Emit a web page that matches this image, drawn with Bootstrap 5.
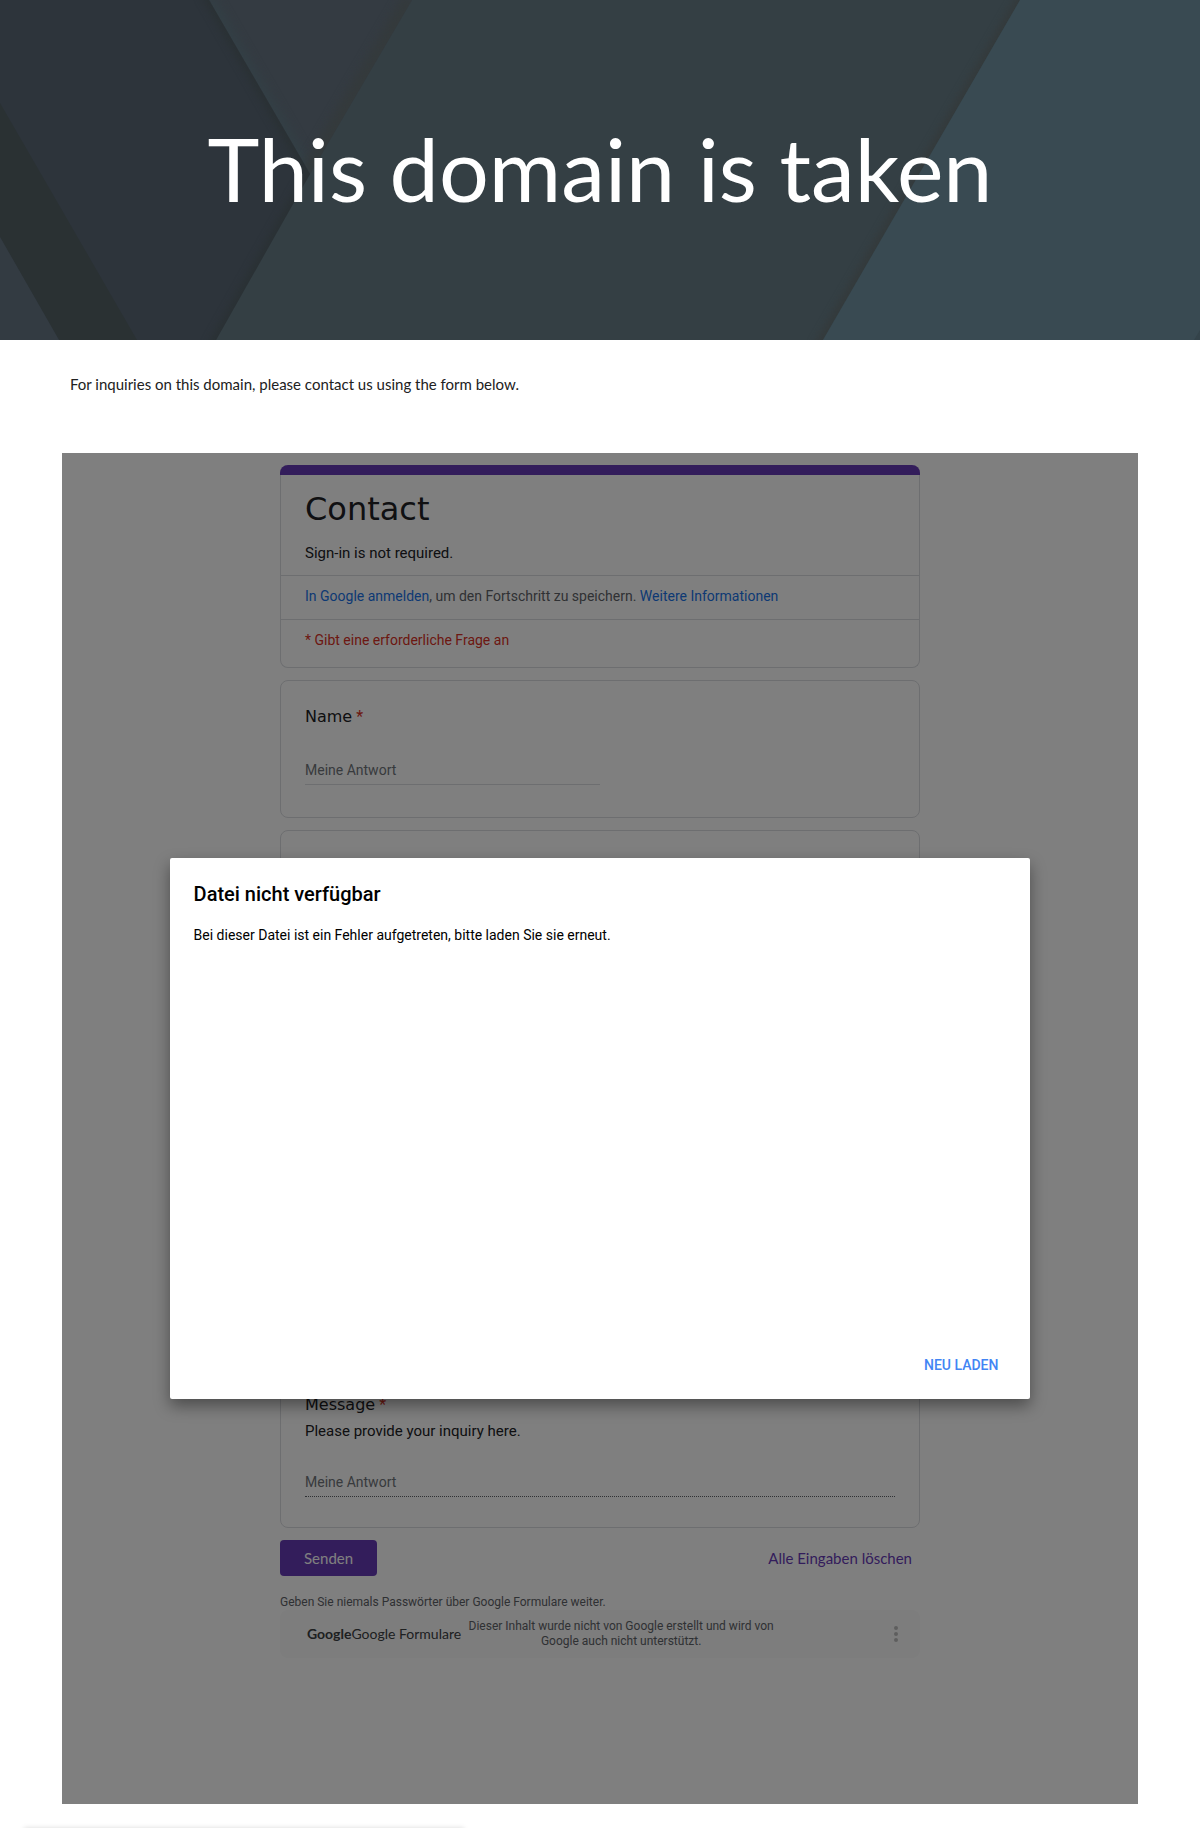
<!DOCTYPE html>
<html lang="de">
<head>
<meta charset="utf-8">
<meta name="viewport" content="width=device-width, initial-scale=1">
<title>This domain is taken</title>
<link href="https://cdn.jsdelivr.net/npm/bootstrap@5.3.0/dist/css/bootstrap.min.css" rel="stylesheet">
<style>
  body { font-family: Roboto, "Liberation Sans", sans-serif; font-size: 14px; line-height: 20px; color: #202124; }

  /* banner */
  .hero { min-height: 340px; padding-bottom: 4px; background: #343f44; }
  .hero h1 { font-family: Lato, sans-serif; font-size: 88px; line-height: 104px; font-weight: 400; }

  /* page */
  .page-body { padding: 0 62px; }
  .intro { font-family: Lato, sans-serif; font-size: 15px; line-height: 24px; padding: 32px 8px 57px; color: #212121; }

  /* form */
  .embed { padding: 12px 12px 146px; }
  .form-col { max-width: 640px; }
  .form-col a { color: #1a73e8; text-decoration: none; }
  .panel { background: #fff; border: 1px solid #dadce0; border-radius: 8px; margin-bottom: 12px; }
  .panel-intro { border-top: 0; padding-bottom: 4px; }
  .panel-stripe { height: 10px; background: #673ab7; margin: 0 -1px; border-radius: 8px 8px 0 0; }
  .panel-head { padding: 14px 24px 12px; }
  .panel-row { padding: 10px 24px 13px; border-top: 1px solid #dadce0; }
  .panel-title { font-family: "DejaVu Sans", sans-serif; font-size: 32px; line-height: 40px; margin: 0 0 14px; }
  .desc { font-size: 15px; line-height: 20px; }
  .question { padding: 24px 24px 32px; }
  .question-tall { min-height: 526px; }
  .question-long { padding-bottom: 30px; }
  .q-label { font-family: "DejaVu Sans", sans-serif; font-size: 16px; line-height: 24px; }
  .q-label .req { font-family: Roboto, sans-serif; }
  .req { color: #d93025; }
  .muted { color: #5f6368; }
  .answer { border: 0; border-bottom: 1px solid #dadce0; border-radius: 0; margin-top: 31px; padding: 0 0 4px; height: 25px; font-size: 14px; line-height: 20px; background: transparent; }
  .answer::placeholder { color: #70757a; opacity: 1; }
  .answer-dotted { border-bottom: 1px dotted #5f6368; }
  .geo { font-family: Lato, sans-serif; font-size: 15px; line-height: 20px; }
  .send { background: #673ab7; color: #fff; border: 0; border-radius: 4px; padding: 8px 24px; }
  .clear { background: none; border: 0; color: #673ab7; padding: 8px; }
  .warn { font-size: 12px; line-height: 16px; margin-top: 18px; color: #5f6368; }
  .form-foot { background: #fafafa; border-radius: 8px; padding: 9px 12px 9px 27px; font-size: 12px; line-height: 15px; color: #5f6368; }
  .foot-brand { font-family: Lato, sans-serif; font-size: 14px; line-height: 20px; color: #3c4043; }
  .foot-note { max-width: 312px; }
  .more { width: 24px; height: 24px; }

  /* error dialog */
  .scrim { background: rgba(0, 0, 0, .5); }
  .dialog-box { width: 80%; height: 40%; background: #fff; color: #000; border-radius: 2px; padding: 24px 24px 16px; box-shadow: 0 7px 16px rgba(0, 0, 0, .4); }
  .dialog-box h2 { font-size: 20px; line-height: 24px; font-weight: 500; margin: 0 0 19px; }
  .reload { color: #4285f4; background: none; border: 0; font-weight: 500; padding: 8px; }

  /* notice waiting below the page edge */
  .page-end { height: 24px; }
  .notice-bar { top: 100%; left: 24px; width: 440px; height: 40px; box-shadow: 0 0 5px rgba(0, 0, 0, .15); }
</style>
</head>
<body>
<header class="hero position-relative overflow-hidden d-flex align-items-center justify-content-center text-white text-center">
  <svg class="position-absolute top-0 start-0 w-100 h-100" viewBox="0 0 1200 340" preserveAspectRatio="xMidYMid slice" aria-hidden="true">
    <defs>
      <filter id="soft" x="-20%" y="-20%" width="140%" height="140%" color-interpolation-filters="sRGB"><feGaussianBlur stdDeviation="4"/></filter>
      <clipPath id="cLeft"><path d="M0 0H209L310 174L216 340H0Z"/></clipPath>
      <clipPath id="cTri"><path d="M209 0H412L310 174Z"/></clipPath>
      <clipPath id="cMid"><path d="M412 0H1020L823 340H216Z"/></clipPath>
    </defs>
    <rect width="1200" height="340" fill="#343f44"/>
    <path d="M209 0H412L310 174Z" fill="#343b42"/>
    <g clip-path="url(#cTri)">
      <path d="M209 0L310 174" stroke="#333f45" stroke-width="12" filter="url(#soft)"/>
      <path d="M412 0L310 174" stroke="#343a3c" stroke-width="20" filter="url(#soft)"/>
    </g>
    <path d="M0 0H209L310 174L216 340H0Z" fill="#2d343b"/>
    <g clip-path="url(#cLeft)">
      <path d="M205 -8L310 174L212 348" fill="none" stroke="#293032" stroke-width="8" filter="url(#soft)"/>
    </g>
    <path d="M0 103L137 340H59L0 237Z" fill="#2a3133"/>
    <path d="M0 237L59 340H0Z" fill="#333b42"/>
    <g clip-path="url(#cMid)">
      <path d="M1025 -8L818 348" stroke="#343838" stroke-width="7" filter="url(#soft)"/>
    </g>
    <path d="M1020 0H1200V340H823Z" fill="#394a52"/>
    <path d="M1200 330V340H1194Z" fill="#34434a"/>
  </svg>
  <h1 class="position-relative m-0">This domain is taken</h1>
</header>

<main class="page-body">
  <p class="intro m-0">For inquiries on this domain, please contact us using the form below.</p>

  <section class="embed position-relative">
    <form class="form-col mx-auto">
      <div class="panel panel-intro">
        <div class="panel-stripe"></div>
        <div class="panel-head">
          <h2 class="panel-title">Contact</h2>
          <p class="desc m-0">Sign-in is not required.</p>
        </div>
        <div class="panel-row muted"><a href="#">In Google anmelden</a>, um den Fortschritt zu speichern. <a href="#">Weitere Informationen</a></div>
        <div class="panel-row req">* Gibt eine erforderliche Frage an</div>
      </div>

      <div class="panel question">
        <label class="q-label d-flex gap-1" for="name">Name<span class="req">*</span></label>
        <input class="answer d-block w-50" id="name" type="text" placeholder="Meine Antwort">
      </div>

      <div class="panel question question-tall"></div>

      <div class="panel question question-long">
        <label class="q-label d-flex gap-1" for="message">Message<span class="req">*</span></label>
        <p class="desc mt-1 mb-0">Please provide your inquiry here.</p>
        <input class="answer answer-dotted d-block w-100" id="message" type="text" placeholder="Meine Antwort">
      </div>

      <div class="d-flex justify-content-between">
        <button type="submit" class="send geo">Senden</button>
        <button type="reset" class="clear geo">Alle Eingaben löschen</button>
      </div>

      <p class="warn mb-0">Geben Sie niemals Passwörter über Google Formulare weiter.</p>
      <footer class="form-foot d-flex align-items-center">
        <span class="foot-brand text-nowrap"><b>Google</b>Google Formulare</span>
        <span class="foot-note text-center ms-1">Dieser Inhalt wurde nicht von Google erstellt und wird von Google auch nicht unterstützt.</span>
        <svg class="more ms-auto" viewBox="0 0 24 24" fill="#bdbdbd" aria-hidden="true"><circle cx="12" cy="6" r="2"/><circle cx="12" cy="12" r="2"/><circle cx="12" cy="18" r="2"/></svg>
      </footer>
    </form>

    <div class="scrim position-absolute top-0 start-0 w-100 h-100 d-flex align-items-center justify-content-center">
      <div class="dialog-box d-flex flex-column" role="dialog" aria-labelledby="dialog-title">
        <h2 id="dialog-title">Datei nicht verfügbar</h2>
        <p class="m-0">Bei dieser Datei ist ein Fehler aufgetreten, bitte laden Sie sie erneut.</p>
        <button type="button" class="reload mt-auto align-self-end">NEU LADEN</button>
      </div>
    </div>
  </section>
</main>
<div class="page-end position-relative overflow-hidden"><div class="notice-bar position-absolute"></div></div>
<script src="https://cdn.jsdelivr.net/npm/bootstrap@5.3.0/dist/js/bootstrap.bundle.min.js"></script>
</body>
</html>
